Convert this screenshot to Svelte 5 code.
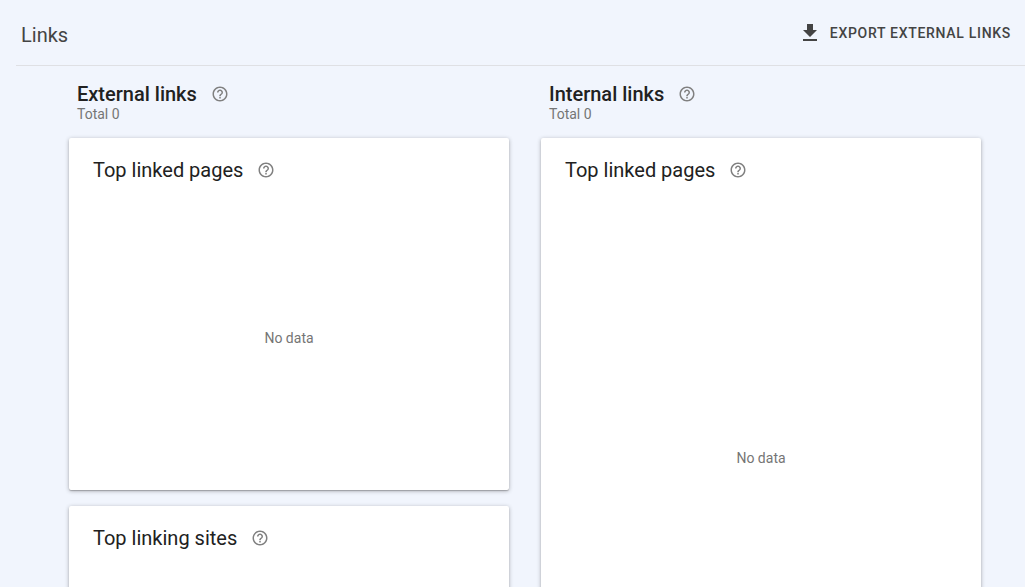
<script>
  const external = [
    { title: 'Top linked pages', message: 'No data' },
    { title: 'Top linking sites', message: '' },
  ];
</script>

{#snippet help(label)}
  <button class="help" aria-label={label}>
    <svg viewBox="0 0 24 24" width="18" height="18" aria-hidden="true">
      <path d="M11 18h2v-2h-2v2zm1-16C6.48 2 2 6.48 2 12s4.48 10 10 10 10-4.480 10-10S17.520 2 12 2zm0 18c-4.410 0-8-3.590-8-8s3.590-8 8-8 8 3.590 8 8-3.590 8-8 8zm0-14c-2.210 0-4 1.790-4 4h2c0-1.100.9-2 2-2s2 .9 2 2c0 2-3 1.750-3 5h2c0-2.250 3-2.500 3-5 0-2.210-1.790-4-4-4z" />
    </svg>
  </button>
{/snippet}

<main>
  <header>
    <h1>Links</h1>
    <button class="export">
      <svg viewBox="0 0 24 24" width="24" height="24" aria-hidden="true">
        <path d="M19 9h-4V3H9v6H5l7 7 7-7zM5 18v2h14v-2H5z" />
      </svg>
      Export external links
    </button>
  </header>

  <div class="columns">
    <section>
      <div class="heading">
        <h2>External links {@render help('About external links')}</h2>
        <p>Total 0</p>
      </div>
      {#each external as { title, message }}
        <article class="card">
          <h3>{title} {@render help('About ' + title)}</h3>
          {#if message}<div class="empty">{message}</div>{/if}
        </article>
      {/each}
    </section>
    <section>
      <div class="heading">
        <h2>Internal links {@render help('About internal links')}</h2>
        <p>Total 0</p>
      </div>
      <article class="card tall">
        <h3>Top linked pages {@render help('About top linked pages')}</h3>
        <div class="empty">No data</div>
      </article>
    </section>
  </div>
</main>

<style>
  :global(html) {
    scrollbar-width: none;
  }
  :global(body) {
    margin: 0;
    background: #f1f5fd;
  }
  main {
    font-family: Roboto, Arial, sans-serif;
    color: #212121;
  }
  h1, h2, h3, p {
    margin: 0;
  }
  button {
    border: 0;
    padding: 0;
    background: none;
    font: inherit;
    color: inherit;
    cursor: pointer;
  }
  svg {
    display: block;
    fill: currentColor;
  }
  header {
    display: flex;
    align-items: center;
    justify-content: space-between;
    height: 66px;
    margin-left: 16px;
    padding: 0 14px 0 4px;
    box-sizing: border-box;
    border-bottom: 1px solid #dfe0e4;
  }
  h1 {
    font-size: 20px;
    line-height: 28px;
    font-weight: 400;
    color: #444;
    padding: 4px 0 0 1px;
  }
  .export {
    display: flex;
    align-items: center;
    gap: 8px;
    font-size: 14px;
    line-height: 20px;
    font-weight: 500;
    letter-spacing: 0.05em;
    text-transform: uppercase;
    color: #444;
  }
  .columns {
    display: grid;
    grid-template-columns: repeat(2, minmax(0, 1fr));
    gap: 32px;
    padding: 16px 44px 16px 69px;
  }
  .heading {
    padding: 0 8px 16px;
  }
  h2, h3 {
    display: flex;
    align-items: center;
    gap: 14px;
    font-size: 20px;
    line-height: 24px;
  }
  h2 {
    font-weight: 500;
  }
  h3 {
    font-weight: 400;
  }
  p {
    font-size: 14px;
    line-height: 16px;
    color: #757575;
  }
  .help {
    color: #808080;
  }
  .card {
    display: flex;
    flex-direction: column;
    box-sizing: border-box;
    min-height: 352px;
    margin-bottom: 16px;
    padding: 20px 24px;
    background: #fff;
    border-radius: 2px;
    box-shadow: 0 1px 4px rgba(0, 0, 0, 0.3), 0 1px 1px rgba(0, 0, 0, 0.2);
  }
  .tall {
    min-height: 592px;
  }
  .empty {
    flex: 1;
    display: grid;
    place-items: center;
    padding-top: 24px;
    font-size: 14px;
    line-height: 20px;
    color: #757575;
  }
</style>
